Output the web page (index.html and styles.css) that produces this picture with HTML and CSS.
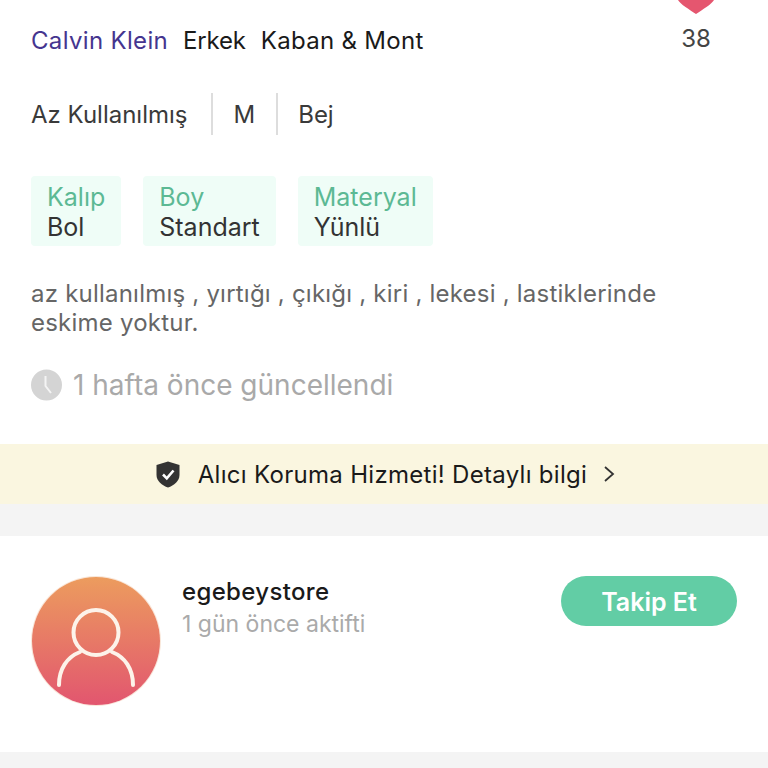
FILE: index.html
```html
<!DOCTYPE html>
<html lang="tr">
<head>
<meta charset="utf-8">
<title>Ürün</title>
<link rel="stylesheet" href="styles.css">
</head>
<body>
<div class="page">
  <section class="info">
    <div class="top">
      <div class="crumbs"><span class="brand">Calvin Klein</span><span class="gender">Erkek</span><span class="category">Kaban &amp; Mont</span></div>
      <div class="likes">
        <svg class="heart" width="36" height="14" viewBox="0 0 36 14"><path d="M0 0H36C34 4 24 10 18 14C12 10 2 4 0 0Z" fill="#e5566f"/></svg>
        <span class="count">38</span>
      </div>
    </div>
    <div class="specs"><span class="spec">Az Kullanılmış</span><span class="spec">M</span><span class="spec">Bej</span></div>
    <div class="tags">
      <div class="tag"><div class="tag-k">Kalıp</div><div class="tag-v">Bol</div></div>
      <div class="tag"><div class="tag-k">Boy</div><div class="tag-v">Standart</div></div>
      <div class="tag"><div class="tag-k">Materyal</div><div class="tag-v">Yünlü</div></div>
    </div>
    <p class="desc">az kullanılmış , yırtığı , çıkığı , kiri , lekesi , lastiklerinde eskime yoktur.</p>
    <div class="updated">
      <svg width="32" height="32" viewBox="0 0 32 32"><circle cx="15.5" cy="16" r="15.5" fill="#d4d4d4"/><path d="M14.5 7V17L20 24" fill="none" stroke="#f4f4f4" stroke-width="2"/></svg>
      <span>1 hafta önce güncellendi</span>
    </div>
  </section>
  <a class="protect">
    <svg width="24" height="27" viewBox="0 0 24 27"><path d="M12 0.5L23.5 4V14C23.5 20 18 24.5 12 26.5C6 24.5 0.5 20 0.5 14V4Z" fill="#333"/><path d="M7 13.5L10.8 17.3L17.5 9.5" fill="none" stroke="#fff" stroke-width="2.6"/></svg>
    <span>Alıcı Koruma Hizmeti! Detaylı bilgi</span>
    <svg class="chev" width="12" height="18" viewBox="0 0 12 18"><path d="M2 2L10 9L2 16" fill="none" stroke="#333" stroke-width="1.8"/></svg>
  </a>
  <section class="seller">
    <div class="avatar">
      <svg width="128" height="128" viewBox="0 0 128 128"><circle cx="64" cy="55.5" r="22.5" fill="none" stroke="#fdf3ea" stroke-width="4"/><path d="M27 108C27 92 35 80 48 75M101 108C101 92 93 80 80 75" fill="none" stroke="#fdf3ea" stroke-width="4" stroke-linecap="round"/></svg>
    </div>
    <div class="meta"><div class="name">egebeystore</div><div class="active">1 gün önce aktifti</div></div>
    <button class="follow">Takip Et</button>
  </section>
</div>
</body>
</html>
```
FILE: styles.css
```css
html, body { margin: 0; padding: 0; background: #f4f4f4; }
body { font-family: Inter, "Noto Sans", sans-serif; color: #333; }
.page { width: 768px; height: 768px; overflow: hidden; }
.info { background: #fff; height: 444px; padding: 0 31px; box-sizing: border-box; }
.top { display: flex; justify-content: space-between; height: 54px; }
.crumbs { display: flex; gap: 15px; margin-top: 26px; font-size: 24px; line-height: 29px; color: #1a1a1a; }
.brand { color: #45358f; letter-spacing: .33px; }
.gender { letter-spacing: -.2px; }
.category { letter-spacing: .3px; }
.likes { display: flex; flex-direction: column; align-items: center; margin-right: 23px; }
.heart { display: block; }
.count { margin-top: 10px; font-size: 24px; line-height: 29px; color: #444; }
.specs { display: flex; margin-top: 39px; height: 42px; align-items: center; font-size: 24px; color: #3a3a3a; }
.spec { display: flex; align-items: center; height: 42px; padding: 0 21px 0 20px; border-left: 2px solid #ddd; }
.spec:first-child { padding-left: 0; border-left: 0; padding-right: 24px; }
.tags { display: flex; gap: 22px; margin-top: 41px; }
.tag { background: #effdf7; padding: 6px 16px 4px; border-radius: 4px; font-size: 25px; line-height: 30px; }
.tag-k { color: #5cb994; }
.tag-v { color: #333; }
.desc { margin: 33px 0 0; font-size: 24px; line-height: 29px; color: #666; width: 660px; letter-spacing: .22px; }
.updated { display: flex; align-items: center; gap: 10px; margin-top: 32px; font-size: 28px; line-height: 32px; color: #a9a9a9; }
.protect { display: flex; align-items: center; justify-content: center; gap: 18px; height: 60px; padding-left: 3px; background: #faf6e0; font-size: 24px; letter-spacing: .3px; color: #1a1a1a; }
.chev { margin-left: -2px; }
.seller { display: flex; align-items: flex-start; margin-top: 32px; height: 216px; background: #fff; padding: 41px 31px 0 32px; box-sizing: border-box; }
.avatar { width: 128px; height: 128px; border-radius: 50%; background: linear-gradient(#ec9c5e, #e2566f); box-shadow: 0 0 0 1px #f9e6d8; flex: none; }
.avatar svg { display: block; }
.meta { flex: 1; margin-left: 22px; }
.name { font-size: 24px; line-height: 30px; font-weight: 500; letter-spacing: .35px; color: #1a1a1a; }
.active { margin-top: 2px; font-size: 23px; line-height: 30px; color: #aaa; }
.follow { width: 176px; height: 50px; margin-top: -1px; border: 0; border-radius: 25px; background: #62cda5; color: #fff; font: 600 25px Inter, sans-serif; padding: 2px 0 0; }
```
